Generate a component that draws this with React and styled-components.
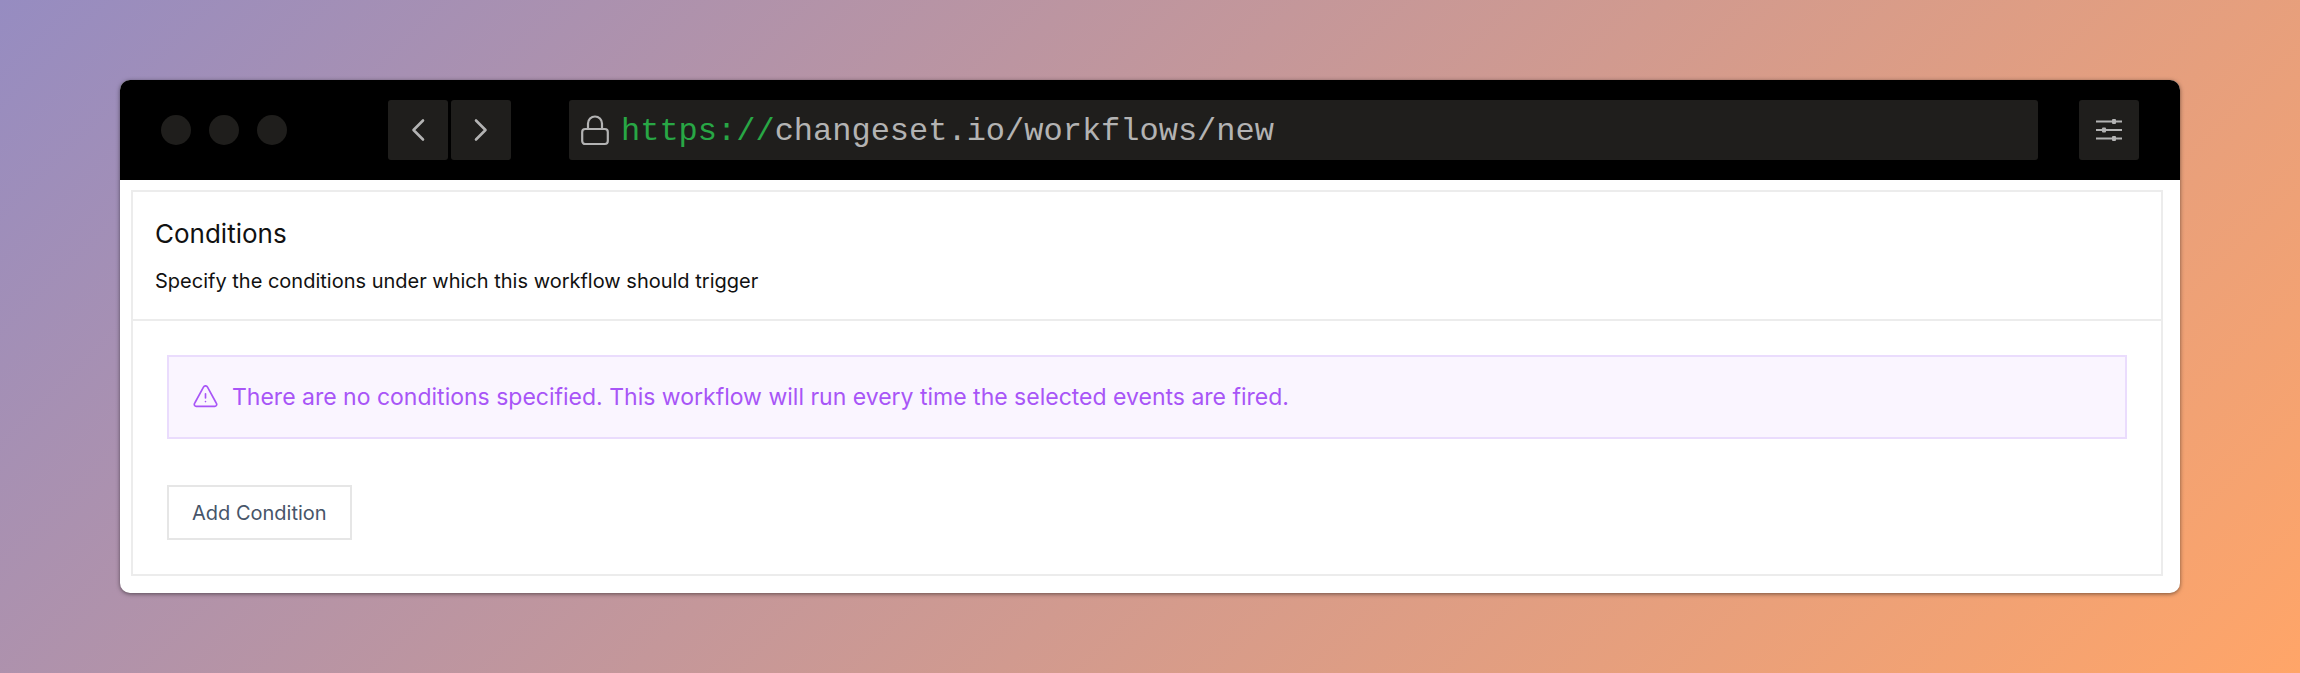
import React from "react";
import styled, { createGlobalStyle } from "styled-components";

const GlobalStyle = createGlobalStyle`
  *, *::before, *::after { box-sizing: border-box; }
  body { margin: 0; font-family: Inter, "Liberation Sans", sans-serif; color: #111; }
`;

const Backdrop = styled.div`
  min-height: 100vh;
  padding: 80px 120px;
  background: linear-gradient(135deg, #968cc1 0%, #ffa568 100%);
`;

const BrowserWindow = styled.div`
  border-radius: 10px;
  overflow: hidden;
  background: #fff;
  box-shadow: 0 1px 4px rgba(0, 0, 0, 0.5);
`;

const TitleBar = styled.header`
  display: flex;
  align-items: center;
  padding: 20px 41px;
  background: #000;
`;

const Dots = styled.div`
  display: flex;
  gap: 18px;
  margin-right: 101px;
`;

const Dot = styled.span`
  width: 30px;
  height: 30px;
  border-radius: 50%;
  background: #1f1e1c;
`;

const NavButtons = styled.nav`
  display: flex;
  gap: 3px;
  margin-right: 58px;
`;

const ToolButton = styled.button`
  display: grid;
  place-items: center;
  width: 60px;
  height: 60px;
  padding: 0;
  border: 0;
  border-radius: 3px;
  background: #1f1e1c;
  color: #b3b3b3;
`;

const AddressBar = styled.label`
  display: flex;
  flex: 1;
  align-items: center;
  height: 60px;
  margin-right: 41px;
  padding: 2px 12px 0;
  border-radius: 3px;
  background: #1f1e1c;
  color: #b3b3b3;
  font: 32px "Liberation Mono", monospace;
`;

const Scheme = styled.span`
  margin-left: 12px;
  color: #28a745;
`;

const AddressInput = styled.input`
  flex: 1;
  min-width: 0;
  padding: 0;
  border: 0;
  outline: 0;
  background: transparent;
  color: inherit;
  font: inherit;
`;

const Page = styled.main`
  padding: 10px 17px 17px 11px;
`;

const Card = styled.section`
  border: 2px solid #ececec;
`;

const CardHeader = styled.div`
  padding: 26px 22px 24px;
  border-bottom: 2px solid #ececec;
`;

const CardTitle = styled.h1`
  margin: 0 0 17px;
  font-size: 26px;
  font-weight: 400;
  line-height: 32px;
`;

const CardText = styled.p`
  margin: 0;
  font-size: 20px;
  line-height: 28px;
`;

const CardBody = styled.div`
  padding: 34px;
`;

const Notice = styled.div`
  display: flex;
  align-items: center;
  gap: 14px;
  margin-bottom: 46px;
  padding: 24px;
  border: 2px solid #eadcfd;
  background: #faf5ff;
  color: #a855f7;
  font-size: 23px;
  line-height: 32px;
`;

const AddButton = styled.button`
  height: 55px;
  padding: 0 23px;
  border: 2px solid #e6e6e6;
  background: #fff;
  color: #475569;
  font: 20px/28px Inter, "Liberation Sans", sans-serif;
`;

const Chevron = ({ d }) => (
  <svg width="24" height="24" viewBox="0 0 24 24" fill="none" stroke="currentColor" strokeWidth="2.6" strokeLinecap="round" strokeLinejoin="round" aria-hidden="true">
    <path d={d} />
  </svg>
);

const LockIcon = () => (
  <svg width="28" height="32" viewBox="0 0 28 32" fill="none" stroke="currentColor" strokeWidth="2.2" aria-hidden="true">
    <rect x="1.2" y="14" width="25.6" height="15" rx="3" />
    <path d="M7 14V8.5a7 7 0 0 1 14 0V14" />
  </svg>
);

const SlidersIcon = () => (
  <svg width="26" height="22" viewBox="0 0 26 22" fill="currentColor" aria-hidden="true">
    <path d="M0 1.5h26v2H0zM0 10h26v2H0zM0 18.5h26v2H0z" />
    <rect x="16" y="0" width="4" height="5" rx="1" />
    <rect x="6" y="8.5" width="4" height="5" rx="1" />
    <rect x="16" y="17" width="4" height="5" rx="1" />
  </svg>
);

const WarningIcon = () => (
  <svg width="25" height="24" viewBox="0 0 26 26" fill="none" stroke="currentColor" strokeWidth="1.8" strokeLinecap="round" strokeLinejoin="round" aria-hidden="true">
    <path d="M10.8 2.2 1.4 19.5a2.2 2.2 0 0 0 2 3.6h19.2a2.2 2.2 0 0 0 2-3.6L15.2 2.2a2.5 2.5 0 0 0-4.4 0Z" />
    <path d="M13 9.5v4.5M13 18h.01" />
  </svg>
);

export default function App() {
  return (
    <Backdrop>
      <GlobalStyle />
      <BrowserWindow>
        <TitleBar>
          <Dots>
            <Dot />
            <Dot />
            <Dot />
          </Dots>
          <NavButtons aria-label="History">
            <ToolButton aria-label="Back"><Chevron d="M17 2.5 7.5 12 17 21.5" /></ToolButton>
            <ToolButton aria-label="Forward"><Chevron d="M7 2.5 16.5 12 7 21.5" /></ToolButton>
          </NavButtons>
          <AddressBar>
            <LockIcon />
            <Scheme>https://</Scheme>
            <AddressInput type="text" aria-label="Address" defaultValue="changeset.io/workflows/new" spellCheck={false} />
          </AddressBar>
          <ToolButton aria-label="Settings"><SlidersIcon /></ToolButton>
        </TitleBar>
        <Page>
          <Card>
            <CardHeader>
              <CardTitle>Conditions</CardTitle>
              <CardText>Specify the conditions under which this workflow should trigger</CardText>
            </CardHeader>
            <CardBody>
              <Notice>
                <WarningIcon />
                <span>There are no conditions specified. This workflow will run every time the selected events are fired.</span>
              </Notice>
              <AddButton type="button">Add Condition</AddButton>
            </CardBody>
          </Card>
        </Page>
      </BrowserWindow>
    </Backdrop>
  );
}
